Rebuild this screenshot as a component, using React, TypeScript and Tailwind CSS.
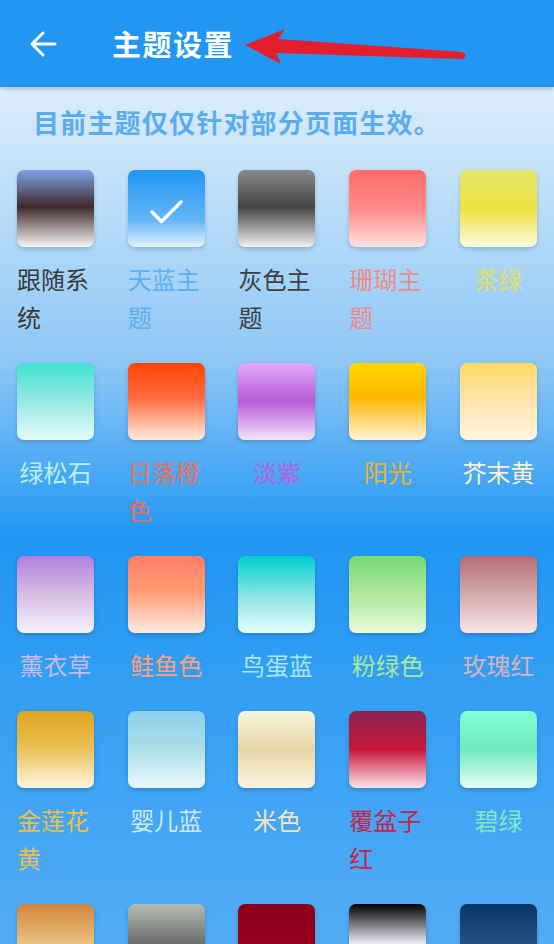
import { ReactElement } from "react";

type Theme = { name: string; swatch: string; text: string; checked?: boolean };

const themes: Theme[] = [
  { name: "跟随系统", swatch: "bg-[linear-gradient(180deg,#7ea2e8_0%,#3f2b2b_48%,#f7f5f5_100%)]", text: "text-[#3a3a3a]" },
  { name: "天蓝主题", swatch: "bg-[linear-gradient(180deg,#2196f3_0%,#64b5f6_65%,#e3f2fd_100%)]", text: "text-[#5eaff0]", checked: true },
  { name: "灰色主题", swatch: "bg-[linear-gradient(180deg,#8a8a8a_0%,#444444_48%,#f0f0f0_100%)]", text: "text-[#404040]" },
  { name: "珊瑚主题", swatch: "bg-[linear-gradient(180deg,#ff6b6b_0%,#ff8a8a_50%,#ffe0e0_100%)]", text: "text-[#f08a8a]" },
  { name: "茶绿", swatch: "bg-[linear-gradient(180deg,#e2e66c_0%,#efe040_50%,#fafbe0_100%)]", text: "text-[#e0e060]" },
  { name: "绿松石", swatch: "bg-[linear-gradient(180deg,#40e0d0_0%,#a8ece8_60%,#e2fafa_100%)]", text: "text-[#b8f0ea]" },
  { name: "日落橙色", swatch: "bg-[linear-gradient(180deg,#ff4500_0%,#ff6a40_45%,#ffecdc_100%)]", text: "text-[#e8705e]" },
  { name: "淡紫", swatch: "bg-[linear-gradient(180deg,#e0a8fa_0%,#b85ad6_50%,#f3e4fb_100%)]", text: "text-[#b660dc]" },
  { name: "阳光", swatch: "bg-[linear-gradient(180deg,#ffd700_0%,#ffb700_45%,#fff3d6_100%)]", text: "text-[#e6b432]" },
  { name: "芥末黄", swatch: "bg-[linear-gradient(180deg,#ffd966_0%,#ffe4ad_50%,#fff6e2_100%)]", text: "text-[#fff1cc]" },
  { name: "薰衣草", swatch: "bg-[linear-gradient(180deg,#b07fdd_0%,#d6bde2_50%,#f4f2fb_100%)]", text: "text-[#c8bce6]" },
  { name: "鲑鱼色", swatch: "bg-[linear-gradient(180deg,#ff7e68_0%,#ff9a72_45%,#ffe9e2_100%)]", text: "text-[#ffa07a]" },
  { name: "鸟蛋蓝", swatch: "bg-[linear-gradient(180deg,#00cfcf_0%,#9ee6e6_60%,#e4ffff_100%)]", text: "text-[#a8eaf2]" },
  { name: "粉绿色", swatch: "bg-[linear-gradient(180deg,#76da76_0%,#b4e8a0_55%,#eafcdc_100%)]", text: "text-[#a8e8a0]" },
  { name: "玫瑰红", swatch: "bg-[linear-gradient(180deg,#b46e72_0%,#d9aeb2_55%,#f9e6ea_100%)]", text: "text-[#d8b2bc]" },
  { name: "金莲花黄", swatch: "bg-[linear-gradient(180deg,#dfa420_0%,#e8bd4e_45%,#fff6e0_100%)]", text: "text-[#e8c050]" },
  { name: "婴儿蓝", swatch: "bg-[linear-gradient(180deg,#8ccfee_0%,#a8dde6_45%,#eaf8fd_100%)]", text: "text-[#cdeafa]" },
  { name: "米色", swatch: "bg-[linear-gradient(180deg,#f5f5dc_0%,#e6d7a4_50%,#fbf3e2_100%)]", text: "text-[#f0e6c0]" },
  { name: "覆盆子红", swatch: "bg-[linear-gradient(180deg,#8a2150_0%,#c8173a_50%,#fde2ec_100%)]", text: "text-[#c8204c]" },
  { name: "碧绿", swatch: "bg-[linear-gradient(180deg,#7fffd4_0%,#70e8c0_50%,#e6fff6_100%)]", text: "text-[#7fe8c8]" },
  // last row is cut off by the screen edge, labels not visible
  { name: "", swatch: "bg-[linear-gradient(180deg,#d4843a_0%,#e8c080_50%,#f5e0b0_100%)]", text: "" },
  { name: "", swatch: "bg-[linear-gradient(180deg,#b4bcb4_0%,#6e706e_50%,#505050_100%)]", text: "" },
  { name: "", swatch: "bg-[linear-gradient(180deg,#8c0018_0%,#a00020_100%)]", text: "" },
  { name: "", swatch: "bg-[linear-gradient(180deg,#000000_0%,#e6e6f0_50%,#ffffff_100%)]", text: "" },
  { name: "", swatch: "bg-[linear-gradient(180deg,#0a3568_0%,#3a6ea6_100%)]", text: "" },
];

const font = "font-['Noto_Sans_CJK_SC','Noto_Sans',sans-serif]";

const App = (): ReactElement => {
  return (
    <div className={`w-full h-[944px] overflow-hidden flex flex-col ${font}`}>
      <header className="relative z-10 h-[87px] shrink-0 bg-[#2196f3] flex items-center pl-[29px] shadow-[0_2px_4px_rgba(0,0,0,0.22)]">
        <svg width="28" height="28" viewBox="0 0 28 28" fill="none" stroke="white" strokeWidth="3" strokeLinecap="round" strokeLinejoin="round">
          <path d="M26 14H4M14 3L3 14l11 11" />
        </svg>
        <h1 className="ml-[55px] text-[29px] leading-none font-bold tracking-[1.5px] text-white">主题设置</h1>

        {/* red annotation arrow */}
        <svg className="absolute left-0 top-0" width="554" height="87" viewBox="0 0 554 87">
          <path d="M245 45L285 29L278 39L463 52Q468 55.5 463 59L276 53L281 64Z" fill="#e41f2b" />
        </svg>
      </header>

      <main className="flex-1 bg-[linear-gradient(180deg,#dcedfb_0%,#8dc7f6_30%,#2196f3_49%,#5ab0f5_100%)]">
        <p className="pt-[17px] px-[33px] text-[26px] leading-[36px] font-semibold tracking-[1.2px] text-[#5aacec]">
          目前主题仅仅针对部分页面生效。
        </p>

        <div className="grid grid-cols-5 mt-[30px]">
          {themes.map((t, i) => (
            <div key={i} className="flex flex-col items-center pb-[27px]">
              <div className={`relative w-[77px] h-[77px] rounded-[7px] shadow-[0_2px_4px_rgba(0,0,0,0.18)] ${t.swatch}`}>
                {t.checked && (
                  <svg className="absolute left-[18.5px] top-[18.5px]" width="40" height="40" viewBox="0 0 40 40" fill="none" stroke="white" strokeWidth="3.5" strokeLinecap="round" strokeLinejoin="round">
                    <path d="M6 23l9.5 9.5L35 13" />
                  </svg>
                )}
              </div>
              {t.name && (
                <div className="mt-[13px] w-full text-center">
                  <span className={`inline-block max-w-[77px] text-left text-[24px] leading-[38px] ${t.text}`}>{t.name}</span>
                </div>
              )}
            </div>
          ))}
        </div>
      </main>
    </div>
  );
}

export default App;
